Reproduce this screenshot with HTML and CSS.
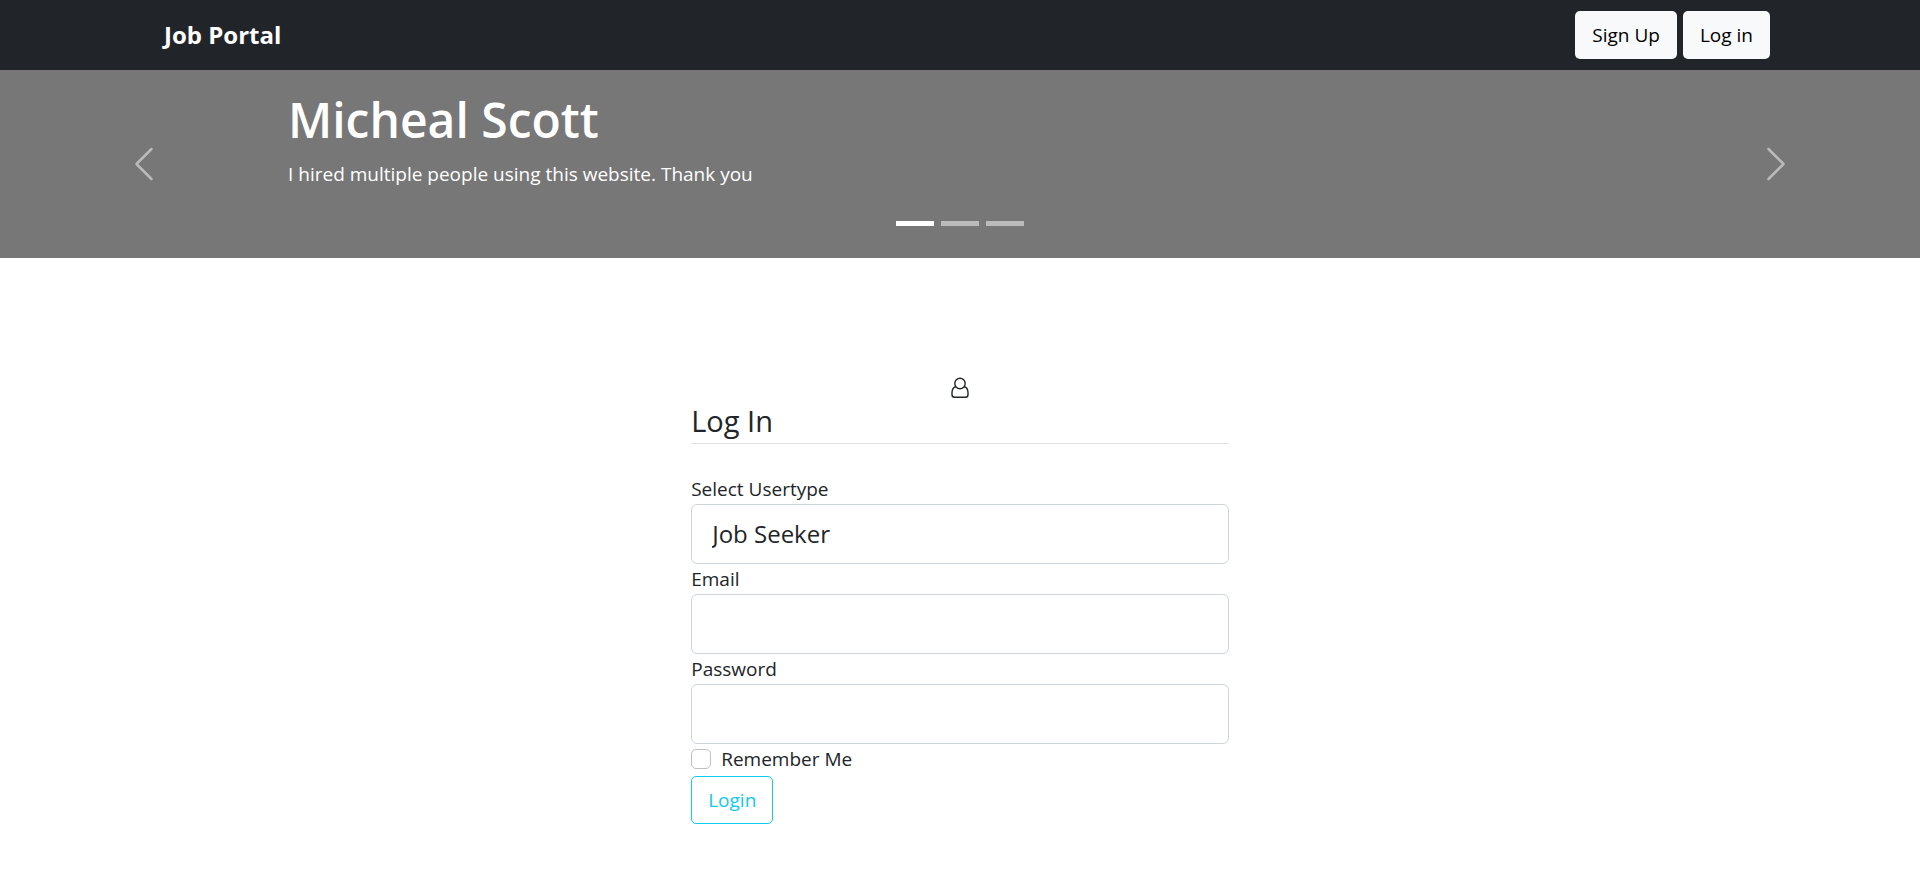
FILE: index.html
```html
<!DOCTYPE html>
<html lang="en">
<head>
  <meta charset="utf-8">
  <meta name="viewport" content="width=device-width, initial-scale=1">
  <title>Job Portal</title>
  <link rel="stylesheet" href="styles.css">
</head>
<body>
  <header class="navbar">
    <div class="navbar-inner">
      <a class="brand" href="#">Job Portal</a>
      <nav class="nav-actions">
        <a class="btn btn-light" href="#">Sign Up</a>
        <a class="btn btn-light" href="#">Log in</a>
      </nav>
    </div>
  </header>

  <section class="carousel">
    <button class="carousel-control" type="button" aria-label="Previous">
      <svg class="chevron" viewBox="0 0 16 16" fill="currentColor" aria-hidden="true"><path d="M11.354 1.646a.5.5 0 0 1 0 .708L5.707 8l5.647 5.646a.5.5 0 0 1-.708.708l-6-6a.5.5 0 0 1 0-.708l6-6a.5.5 0 0 1 .708 0z"/></svg>
    </button>
    <div class="carousel-body">
      <div class="carousel-caption">
        <h1 class="carousel-title">Micheal Scott</h1>
        <p class="carousel-text">I hired multiple people using this website. Thank you</p>
      </div>
      <div class="indicators">
        <button class="indicator indicator-active" type="button" aria-label="Slide 1"></button>
        <button class="indicator" type="button" aria-label="Slide 2"></button>
        <button class="indicator" type="button" aria-label="Slide 3"></button>
      </div>
    </div>
    <button class="carousel-control" type="button" aria-label="Next">
      <svg class="chevron" viewBox="0 0 16 16" fill="currentColor" aria-hidden="true"><path d="M4.646 1.646a.5.5 0 0 1 .708 0l6 6a.5.5 0 0 1 0 .708l-6 6a.5.5 0 0 1-.708-.708L10.293 8 4.646 2.354a.5.5 0 0 1 0-.708z"/></svg>
    </button>
  </section>

  <main class="login">
    <svg class="user-icon" viewBox="0 0 20 22" fill="none" stroke="currentColor" stroke-width="1.4" aria-hidden="true">
      <circle cx="10" cy="6.500" r="5.200"/>
      <path d="M5.800 9.700C3 10.300 2 13 2 15.800V17.800Q2 20.300 4.500 20.300H15.500Q18 20.300 18 17.800V15.800C18 13 17 10.300 14.200 9.700"/>
    </svg>
    <h2 class="login-title">Log In</h2>
    <form class="login-form">
      <label class="label" for="usertype">Select Usertype</label>
      <select class="field" id="usertype">
        <option>Job Seeker</option>
        <option>Employer</option>
      </select>
      <label class="label" for="email">Email</label>
      <input class="field" id="email" type="email">
      <label class="label" for="password">Password</label>
      <input class="field" id="password" type="password">
      <div class="remember">
        <input class="checkbox" id="remember" type="checkbox">
        <label class="label" for="remember">Remember Me</label>
      </div>
      <button class="btn btn-outline" type="submit">Login</button>
    </form>
  </main>
</body>
</html>
```
FILE: styles.css
```css
*,
*::before,
*::after {
  box-sizing: border-box;
}

body {
  margin: 0;
  background: #fff;
  color: #212529;
  font-family: "Segoe UI", "Open Sans", "Noto Sans", sans-serif;
  font-size: 19px;
  line-height: 30px;
}

.navbar {
  background: #212529;
}

.navbar-inner {
  display: flex;
  align-items: center;
  justify-content: space-between;
  max-width: 1650px;
  min-height: 70px;
  margin: 0 auto;
  padding: 10px 15px;
}

.brand {
  padding-left: 14px;
  color: #fff;
  font-size: 24px;
  font-weight: 700;
  text-decoration: none;
}

.nav-actions {
  display: flex;
  gap: 6px;
}

.btn {
  padding: 8px 16px;
  border: 1px solid transparent;
  border-radius: 5px;
  font: inherit;
  text-decoration: none;
  cursor: pointer;
}

.btn-light {
  background: #f8f9fa;
  color: #000;
}

.btn-outline {
  align-self: flex-start;
  margin-top: 2px;
  border-color: #0dcaf0;
  background: transparent;
  color: #0dcaf0;
}

.carousel {
  display: flex;
  background: #777;
  color: #fff;
}

.carousel-control {
  display: flex;
  align-items: center;
  justify-content: center;
  width: 15%;
  padding: 0;
  border: 0;
  background: none;
  color: #fff;
  opacity: 0.5;
  cursor: pointer;
}

.chevron {
  width: 40px;
  height: 40px;
}

.carousel-body {
  display: flex;
  flex: 1;
  flex-direction: column;
  gap: 32px;
  padding: 20px 0 32px;
}

.carousel-title {
  margin: 0 0 9px;
  font-size: 48px;
  font-weight: 600;
  line-height: 60px;
}

.carousel-text {
  margin: 0;
  font-weight: 500;
}

.indicators {
  display: flex;
  justify-content: center;
  gap: 7px;
}

.indicator {
  width: 38px;
  height: 5px;
  padding: 0;
  border: 0;
  background: #fff;
  opacity: 0.5;
  cursor: pointer;
}

.indicator-active {
  opacity: 1;
}

.login {
  display: flex;
  flex-direction: column;
  width: 28%;
  min-width: 300px;
  margin: 0 auto;
  padding: 119px 0 40px;
}

.user-icon {
  align-self: center;
  width: 20px;
  height: 22px;
}

.login-title {
  margin: 4px 0 30px;
  padding-bottom: 4px;
  border-bottom: 1px solid #dee2e6;
  font-size: 29px;
  font-weight: 400;
  line-height: 36px;
}

.login-form {
  display: flex;
  flex-direction: column;
}

.field {
  width: 100%;
  height: 60px;
  padding: 0 20px;
  border: 1px solid #ced4da;
  border-radius: 6px;
  background: #fff;
  color: #212529;
  font: inherit;
  font-size: 24px;
  appearance: none;
}

.remember {
  display: flex;
  align-items: center;
  gap: 10px;
}

.checkbox {
  width: 20px;
  height: 20px;
  margin: 0;
  border: 1px solid #bfbfbf;
  border-radius: 5px;
  background: #fff;
  appearance: none;
}

.checkbox:checked {
  border-color: #0d6efd;
  background: #0d6efd;
}
```
